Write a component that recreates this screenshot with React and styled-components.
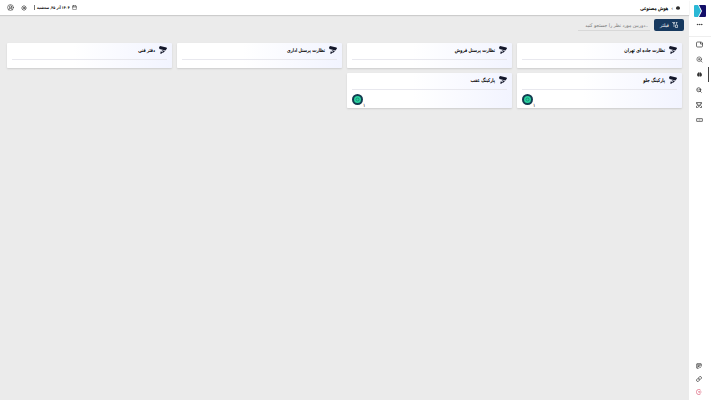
import React from "react";
import styled, { createGlobalStyle } from "styled-components";
import {
  Calendar,
  CircleUserRound,
  Sun,
  Ellipsis,
  ZoomIn,
  SearchCheck,
  Link,
} from "lucide-react";
import { FaBrain } from "react-icons/fa";

const groups = [
  { title: "نظارت جاده ای تهران" },
  { title: "نظارت پرسنل فروش" },
  { title: "نظارت پرسنل اداری" },
  { title: "دفتر فنی" },
  { title: "پارکینگ جلو", count: "۱" },
  { title: "پارکینگ عقب", count: "۱" },
];

const CameraIcon = () => (
  <svg width="8" height="8" viewBox="0 0 16 16" fill="#14182b">
    <path d="M0 3L2 0L15 3L16 5L13 9L1 6Z" />
    <path d="M5 8L12 10L9 13L5 14V16H3V11H5L6 12L8 11Z" />
  </svg>
);

const FilterIcon = () => (
  <svg width="6" height="6" viewBox="0 0 12 12" fill="none" stroke="#fff" strokeWidth="1.2">
    <path d="M1 1H6L4 4V10M1 1L4 4M8 1H11M9 1V5M7 6H11V11H7Z" />
  </svg>
);

const WalletIcon = () => (
  <svg width="7" height="7" viewBox="0 0 14 14" fill="none" stroke="currentColor" strokeWidth="1.4">
    <path d="M9 2H3Q1 2 1 4V10Q1 12 3 12H11Q13 12 13 10V5" />
    <path d="M9 2V6H13V4L11 2Z" />
  </svg>
);

const PeopleIcon = () => (
  <svg width="6" height="6" viewBox="0 0 14 14" fill="none" stroke="currentColor" strokeWidth="1.7">
    <path d="M1 5V1H13V5M1 9V13H4L7 10L10 13H13V9M3 8H11" />
    <circle cx="4" cy="5" r="1" />
    <circle cx="10" cy="5" r="1" />
  </svg>
);

const PlateIcon = () => (
  <svg width="7" height="4" viewBox="0 0 14 8" fill="none" stroke="currentColor" strokeWidth="1.2">
    <rect x="1" y="1" width="12" height="6" rx="1" />
    <path d="M4 3V5M7 3V5M10 3V5" />
  </svg>
);

const NotesIcon = () => (
  <svg width="6" height="6" viewBox="0 0 14 14" fill="none" stroke="currentColor" strokeWidth="2">
    <path d="M12 7V2H2V12H6M4 5H10M4 8H8M8 12L12 8" />
  </svg>
);

const ExitIcon = () => (
  <svg width="6" height="6" viewBox="0 0 14 14" fill="none" stroke="currentColor" strokeWidth="1.5">
    <path d="M11 3A6 6 0 1 0 11 11M13 7H6M8 5L6 7L8 9" />
  </svg>
);

const App = () => {
  return (
    <Page dir="rtl">
      <GlobalStyle />
      <Sidebar>
        <Logo viewBox="0 0 12 12">
          <path d="M1 0H4L7 6L4 12H1Q0 12 0 11V1Q0 0 1 0Z" fill="#2bb8d6" />
          <path d="M5 0H11Q12 0 12 1V11Q12 12 11 12H5L8 6Z" fill="#130f68" />
        </Logo>
        <SideNav>
          <SideLink href="#menu" aria-label="منو"><Ellipsis size={7} strokeWidth={3} /></SideLink>
        </SideNav>
        <Divider />
        <SideNav>
          <SideLink href="#wallet" aria-label="داشبورد"><WalletIcon /></SideLink>
          <SideLink href="#zoom" aria-label="جستجو"><ZoomIn size={7} /></SideLink>
          <SideLink href="#ai" aria-label="هوش مصنوعی" $active><FaBrain size={5} /></SideLink>
          <SideLink href="#check" aria-label="بررسی"><SearchCheck size={6} strokeWidth={3} /></SideLink>
          <SideLink href="#face" aria-label="چهره"><PeopleIcon /></SideLink>
          <SideLink href="#plate" aria-label="پلاک"><PlateIcon /></SideLink>
        </SideNav>
        <SideFooter>
          <SideLink href="#notes" aria-label="گزارش"><NotesIcon /></SideLink>
          <SideLink href="#links" aria-label="پیوند"><Link size={6} strokeWidth={3} /></SideLink>
          <SideLink href="#exit" aria-label="خروج" $danger><ExitIcon /></SideLink>
        </SideFooter>
      </Sidebar>
      <Content>
        <Header>
          <Crumb><FaBrain size={4} /><span>›</span><Strong>هوش مصنوعی</Strong></Crumb>
          <Tools>
            <Today><Calendar size={5} />۱۴۰۴ آذر ۲۵, سه‌شنبه</Today>
            <IconButton aria-label="روشنایی"><Sun size={6} strokeWidth={3} /></IconButton>
            <IconButton aria-label="حساب کاربری"><CircleUserRound size={7} /></IconButton>
          </Tools>
        </Header>
        <Main>
          <Filters>
            <FilterButton><FilterIcon />فیلتر</FilterButton>
            <Search aria-label="جستجوی دوربین" placeholder="..دوربین مورد نظر را جستجو کنید" />
          </Filters>
          <Grid>
            {groups.map((group) => (
              <Card key={group.title}>
                <CardTitle><CameraIcon />{group.title}</CardTitle>
                {group.count && (
                  <Status>
                    <Count>{group.count}</Count>
                    <CameraDot viewBox="0 0 22 22">
                      <circle cx="11" cy="11" r="11" fill="#123c50" />
                      <circle cx="11" cy="11" r="7" fill="#2bd39f" />
                      <circle cx="11" cy="11" r="3" fill="none" stroke="#14806f" strokeWidth="1.5" />
                    </CameraDot>
                  </Status>
                )}
              </Card>
            ))}
          </Grid>
        </Main>
      </Content>
    </Page>
  );
};

export default App;

const GlobalStyle = createGlobalStyle`
  * { box-sizing: border-box; }
  body {
    margin: 0;
    background: #ebebeb;
    color: #111;
    font-family: "DejaVu Sans Condensed", "DejaVu Sans", sans-serif;
    font-size: 5px;
  }
  button, input { font: inherit; }
`;

const Page = styled.div`
  display: flex;
  min-height: 100vh;
`;

const Sidebar = styled.aside`
  display: flex;
  flex-direction: column;
  align-items: center;
  width: 22px;
  padding: 5px 0 2px;
  background: #fff;
`;

const Logo = styled.svg`
  width: 12px;
  height: 12px;
`;

const Divider = styled.hr`
  width: 100%;
  margin: 4px 0 0;
  border: 0;
  border-top: 1px solid #eee;
`;

const SideLink = styled.a`
  display: flex;
  align-items: center;
  justify-content: center;
  height: 15px;
  padding-right: 2px;
  color: ${(props) => (props.$danger ? "#d9536f" : "#333")};
  box-shadow: ${(props) => (props.$active ? "inset -1px 0 #444" : "none")};
`;

const SideNav = styled.nav`
  display: flex;
  flex-direction: column;
  width: 18px;
`;

const SideFooter = styled(SideNav)`
  margin-top: auto;

  ${SideLink} {
    height: 13px;
  }
`;

const Content = styled.div`
  flex: 1;
  min-width: 0;
`;

const Header = styled.header`
  display: flex;
  align-items: center;
  justify-content: space-between;
  height: 15px;
  padding: 0 9px 0 7px;
  background: #fff;
  box-shadow: 0 1px 1px #ccc;
`;

const Crumb = styled.div`
  display: flex;
  align-items: center;
  gap: 3px;
`;

const Strong = styled.span`
  text-shadow: 0 0 currentColor;
`;

const Tools = styled(Crumb)`
  gap: 7px;
`;

const Today = styled.div`
  display: flex;
  align-items: center;
  gap: 2px;
  padding-left: 2px;
  border-left: 1px solid #777;
  font-size: 4px;
  text-shadow: 0 0 currentColor;
`;

const IconButton = styled.button`
  display: flex;
  padding: 0;
  border: 0;
  background: none;
  color: #333;
`;

const Main = styled.main`
  padding: 4px 7px;
`;

const Filters = styled.div`
  display: flex;
  gap: 4px;
  height: 12px;
  margin: 0 -2px;
`;

const FilterButton = styled.button`
  display: flex;
  align-items: center;
  justify-content: center;
  gap: 3px;
  width: 30px;
  border: 0;
  border-radius: 2px;
  background: #17395f;
  color: #fff;
`;

const Search = styled.input`
  width: 72px;
  padding: 0 2px;
  border: 0;
  border-bottom: 1px solid #d8d8d8;
  background: none;

  &::placeholder {
    color: #777;
  }
`;

const Grid = styled.div`
  display: grid;
  grid-template-columns: repeat(4, 1fr);
  align-items: start;
  gap: 5px;
  margin-top: 12px;
`;

const Card = styled.section`
  min-height: 25px;
  padding: 0 5px;
  border-radius: 1px;
  background: linear-gradient(to left, #f2f4ff, #fff 60%);
  box-shadow: 0 1px 2px #ccc;
`;

const CardTitle = styled.h2`
  display: flex;
  align-items: center;
  gap: 4px;
  height: 17px;
  margin: 0;
  padding-bottom: 2px;
  border-bottom: 1px solid #e8e8ee;
  font-size: 5px;
  font-weight: 400;
  text-shadow: 0 0 currentColor;
`;

const Status = styled.div`
  display: flex;
  align-items: center;
  justify-content: flex-end;
  height: 18px;
`;

const Count = styled.span`
  align-self: flex-end;
`;

const CameraDot = styled.svg`
  width: 11px;
  height: 11px;
`;
